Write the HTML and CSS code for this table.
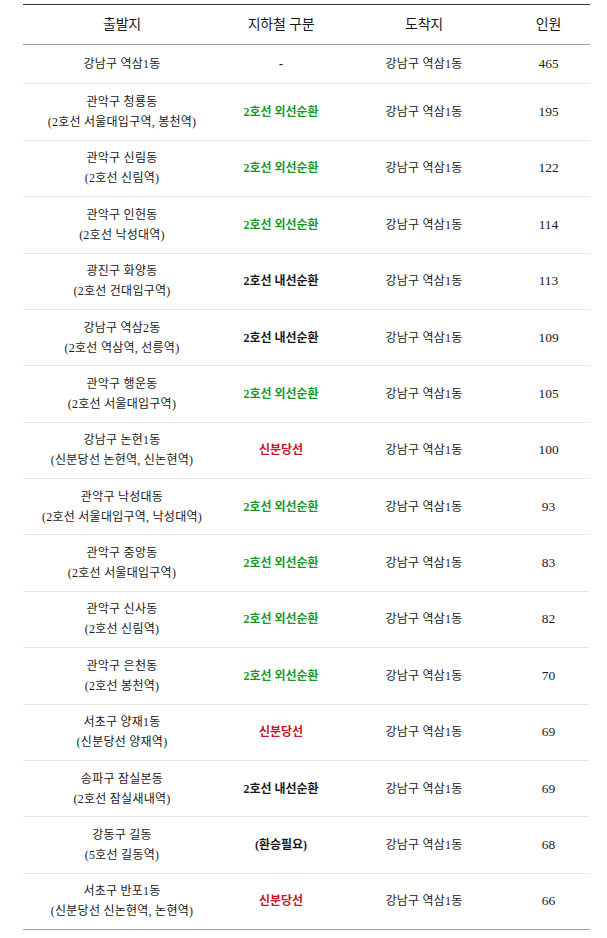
FILE: index.html
```html
<!DOCTYPE html>
<html lang="ko">
<head>
<meta charset="utf-8">
<title>출발지별 인원</title>
<link rel="stylesheet" href="styles.css">
</head>
<body>
<table class="route-table">
  <colgroup>
    <col class="c-from">
    <col class="c-line">
    <col class="c-to">
    <col class="c-num">
  </colgroup>
  <thead>
    <tr><th>출발지</th><th>지하철 구분</th><th>도착지</th><th>인원</th></tr>
  </thead>
  <tbody>
    <tr class="single"><td>강남구 역삼1동</td><td class="line">-</td><td>강남구 역삼1동</td><td class="num">465</td></tr>
    <tr><td>관악구 청룡동<br>(2호선 서울대입구역, 봉천역)</td><td class="line green">2호선 외선순환</td><td>강남구 역삼1동</td><td class="num">195</td></tr>
    <tr><td>관악구 신림동<br>(2호선 신림역)</td><td class="line green">2호선 외선순환</td><td>강남구 역삼1동</td><td class="num">122</td></tr>
    <tr><td>관악구 인헌동<br>(2호선 낙성대역)</td><td class="line green">2호선 외선순환</td><td>강남구 역삼1동</td><td class="num">114</td></tr>
    <tr><td>광진구 화양동<br>(2호선 건대입구역)</td><td class="line">2호선 내선순환</td><td>강남구 역삼1동</td><td class="num">113</td></tr>
    <tr><td>강남구 역삼2동<br>(2호선 역삼역, 선릉역)</td><td class="line">2호선 내선순환</td><td>강남구 역삼1동</td><td class="num">109</td></tr>
    <tr><td>관악구 행운동<br>(2호선 서울대입구역)</td><td class="line green">2호선 외선순환</td><td>강남구 역삼1동</td><td class="num">105</td></tr>
    <tr><td>강남구 논현1동<br>(신분당선 논현역, 신논현역)</td><td class="line red">신분당선</td><td>강남구 역삼1동</td><td class="num">100</td></tr>
    <tr><td>관악구 낙성대동<br>(2호선 서울대입구역, 낙성대역)</td><td class="line green">2호선 외선순환</td><td>강남구 역삼1동</td><td class="num">93</td></tr>
    <tr><td>관악구 중앙동<br>(2호선 서울대입구역)</td><td class="line green">2호선 외선순환</td><td>강남구 역삼1동</td><td class="num">83</td></tr>
    <tr><td>관악구 신사동<br>(2호선 신림역)</td><td class="line green">2호선 외선순환</td><td>강남구 역삼1동</td><td class="num">82</td></tr>
    <tr><td>관악구 은천동<br>(2호선 봉천역)</td><td class="line green">2호선 외선순환</td><td>강남구 역삼1동</td><td class="num">70</td></tr>
    <tr><td>서초구 양재1동<br>(신분당선 양재역)</td><td class="line red">신분당선</td><td>강남구 역삼1동</td><td class="num">69</td></tr>
    <tr><td>송파구 잠실본동<br>(2호선 잠실새내역)</td><td class="line">2호선 내선순환</td><td>강남구 역삼1동</td><td class="num">69</td></tr>
    <tr><td>강동구 길동<br>(5호선 길동역)</td><td class="line">(환승필요)</td><td>강남구 역삼1동</td><td class="num">68</td></tr>
    <tr><td>서초구 반포1동<br>(신분당선 신논현역, 논현역)</td><td class="line red">신분당선</td><td>강남구 역삼1동</td><td class="num">66</td></tr>
  </tbody>
</table>
</body>
</html>
```
FILE: styles.css
```css
html, body {
  margin: 0;
  padding: 0;
  background: #ffffff;
}
body {
  padding: 4px 17px 0 23px;
  font-family: "Liberation Serif", "Noto Sans CJK KR", serif;
  color: #1a1a1a;
}
.route-table {
  width: 567px;
  border-collapse: collapse;
  table-layout: fixed;
  border-top: 1px solid #333333;
  border-bottom: 1px solid #a0a0a0;
}
.c-from { width: 198px; }
.c-line { width: 120px; }
.c-to { width: 166px; }
.c-num { width: 83px; }
.route-table th {
  font-weight: normal;
  font-size: 14px;
  letter-spacing: -0.2px;
  height: 39px;
  padding: 0;
  line-height: 20px;
  text-align: center;
  vertical-align: middle;
  border-bottom: 1px solid #a0a0a0;
}
.route-table td {
  font-size: 12px;
  letter-spacing: 0.25px;
  line-height: 20px;
  padding: 7.7px 0;
  text-align: center;
  vertical-align: middle;
  border-bottom: 1px solid #e8e8e8;
}
.route-table tr.single td {
  height: 23px;
}
.route-table tbody tr:last-child td {
  border-bottom: none;
}
.route-table td.num {
  font-size: 13.5px;
  letter-spacing: 0;
}
.route-table td.line {
  font-weight: bold;
  letter-spacing: 0;
}
.green { color: #17992a; }
.red { color: #c4162c; }
```
